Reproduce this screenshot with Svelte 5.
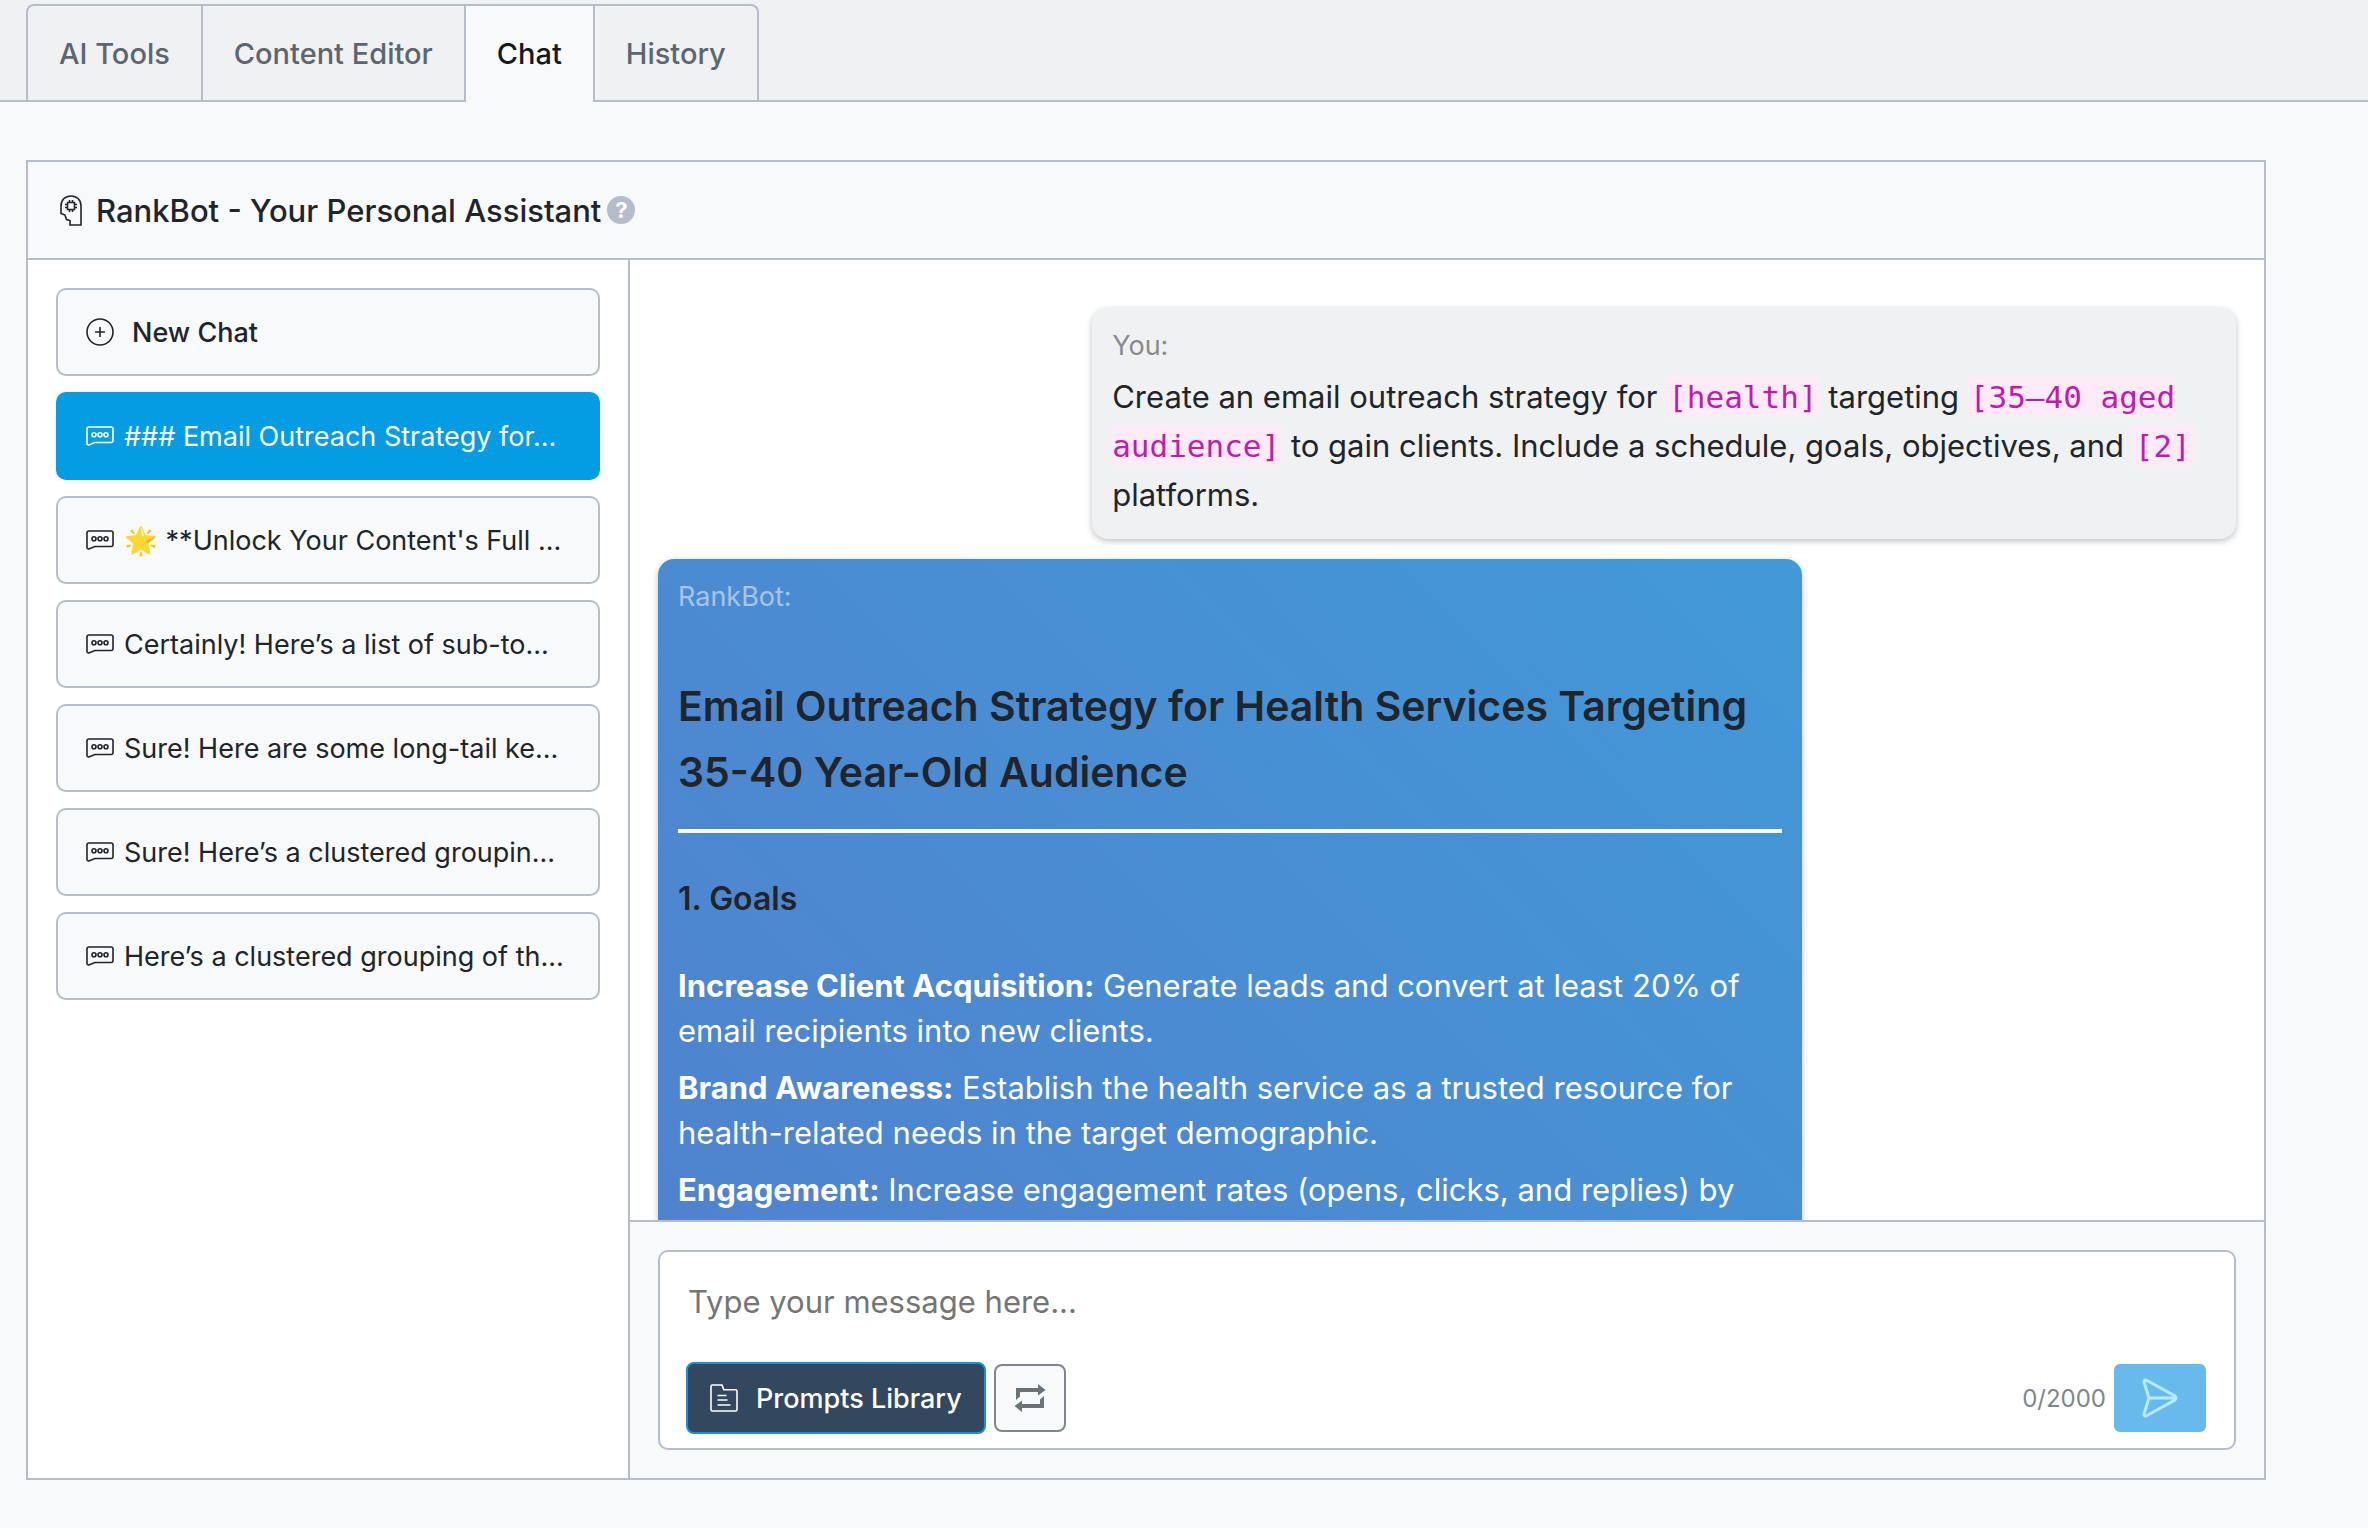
<script lang="ts">
	type Tab = { id: string; label: string };
	type Chat = { id: number; title: string };

	const MAX_LENGTH = 2000;

	const tabs: Tab[] = [
		{ id: 'tools', label: 'AI Tools' },
		{ id: 'editor', label: 'Content Editor' },
		{ id: 'chat', label: 'Chat' },
		{ id: 'history', label: 'History' }
	];

	const chats: Chat[] = [
		{ id: 1, title: '### Email Outreach Strategy for...' },
		{ id: 2, title: "🌟 **Unlock Your Content's Full ..." },
		{ id: 3, title: 'Certainly! Here’s a list of sub-to...' },
		{ id: 4, title: 'Sure! Here are some long-tail ke...' },
		{ id: 5, title: 'Sure! Here’s a clustered groupin...' },
		{ id: 6, title: 'Here’s a clustered grouping of th...' }
	];

	const goals = [
		{
			name: 'Increase Client Acquisition:',
			text: 'Generate leads and convert at least 20% of email recipients into new clients.'
		},
		{
			name: 'Brand Awareness:',
			text: 'Establish the health service as a trusted resource for health-related needs in the target demographic.'
		},
		{
			name: 'Engagement:',
			text: 'Increase engagement rates (opens, clicks, and replies) by'
		}
	];

	let activeTab = $state('chat');
	let activeChat = $state(1);
	let message = $state('');
</script>

<nav class="tab-bar">
	<div class="tabs" role="tablist">
		{#each tabs as tab (tab.id)}
			<button
				type="button"
				role="tab"
				class="tab"
				class:active={activeTab === tab.id}
				aria-selected={activeTab === tab.id}
				onclick={() => (activeTab = tab.id)}
			>
				{tab.label}
			</button>
		{/each}
	</div>
</nav>

<main class="page">
	<section class="panel">
		<header class="panel-header">
			<svg class="icon-head" viewBox="0 0 22 31" aria-hidden="true">
				<path d="M1 11C1 5 5 1 11 1s10 4 10 10v19H10v-4.500l-3.500-1L5 20l-4-1.500z" />
				<path d="M7.500 7.500h7v7h-7zM9.500 5v2.500M12.500 5v2.500M9.500 14.500V17M12.500 14.500V17M5 9.500h2.500M5 12.500h2.500M14.500 9.500H17M14.500 12.500H17" />
			</svg>
			<h1>RankBot - Your Personal Assistant</h1>
			<button type="button" class="help" aria-label="Help">?</button>
		</header>

		<div class="panel-body">
			<aside class="sidebar">
				<button type="button" class="chat-item new-chat">
					<svg class="icon-plus" viewBox="0 0 28 28" aria-hidden="true">
						<circle cx="14" cy="14" r="13" />
						<path d="M14 9v10M9 14h10" />
					</svg>
					New Chat
				</button>
				{#each chats as chat (chat.id)}
					<button
						type="button"
						class="chat-item"
						class:active={activeChat === chat.id}
						onclick={() => (activeChat = chat.id)}
					>
						<svg class="icon-chat" viewBox="0 0 28 20" aria-hidden="true">
							<path d="M3 1h22a2 2 0 0 1 2 2v11.500a2 2 0 0 1-2 2H9l-5.500 2.200Q1 19.500 1 17V3a2 2 0 0 1 2-2z" />
							<circle cx="8" cy="8.700" r="2" />
							<circle cx="14" cy="8.700" r="2" />
							<circle cx="20" cy="8.700" r="2" />
						</svg>
						<span>{chat.title}</span>
					</button>
				{/each}
			</aside>

			<div class="conversation">
				<div class="messages">
					<article class="message user">
						<p class="author">You:</p>
						<p class="prompt">
							Create an email outreach strategy for <code>[health]</code> targeting
							<code>[35–40 aged audience]</code> to gain clients. Include a schedule, goals,
							objectives, and <code>[2]</code> platforms.
						</p>
					</article>

					<article class="message bot">
						<p class="author">RankBot:</p>
						<h2>Email Outreach Strategy for Health Services Targeting 35-40 Year-Old Audience</h2>
						<hr />
						<h3>1. Goals</h3>
						<ul>
							{#each goals as goal (goal.name)}
								<li><strong>{goal.name}</strong> {goal.text}</li>
							{/each}
						</ul>
					</article>
				</div>

				<form class="composer" onsubmit={(event) => event.preventDefault()}>
					<div class="composer-box">
						<textarea
							rows="1"
							aria-label="Message"
							placeholder="Type your message here..."
							maxlength={MAX_LENGTH}
							bind:value={message}
						></textarea>
						<div class="actions">
							<button type="button" class="library">
								<svg class="icon-folder" viewBox="0 0 28 28" aria-hidden="true">
									<path d="M2.500 1H12l1.800 4.700H25.500A1.500 1.500 0 0 1 27 7.200v18.300a1.500 1.500 0 0 1-1.500 1.500h-23A1.500 1.500 0 0 1 1 25.500v-23A1.500 1.500 0 0 1 2.500 1z" />
									<path d="M7.500 11.500h9M7.500 16h10M7.500 21h13" />
								</svg>
								Prompts Library
							</button>
							<button type="button" class="repeat" aria-label="Regenerate">
								<svg class="icon-repeat" viewBox="0 0 32 28" aria-hidden="true">
									<path d="M2 16V4h22V0l7.500 6-7.500 5.500V8H6v4.500zM30 12v12H8v4L.5 22 8 16.500V20h18v-4.500z" />
								</svg>
							</button>
							<span class="counter">{message.length}/{MAX_LENGTH}</span>
							<button type="submit" class="send" aria-label="Send" disabled={!message}>
								<svg class="icon-send" viewBox="0 0 36 40" aria-hidden="true">
									<path d="M2 4q0-3 3-1.500L33 18q2 2 0 4L5 37.500Q2 39 2 36L7 20zM7 20h26" />
								</svg>
							</button>
						</div>
					</div>
				</form>
			</div>
		</div>
	</section>
</main>

<style>
	:global(body) {
		margin: 0;
		background: #f7f9fb;
		color: #212529;
		font-family: Inter, 'Noto Sans', sans-serif;
	}

	h1,
	h2,
	h3,
	p,
	ul {
		margin: 0;
	}

	button,
	textarea {
		box-sizing: border-box;
		font: inherit;
		color: inherit;
	}

	button {
		cursor: pointer;
	}

	svg {
		flex: none;
		fill: none;
		stroke: currentColor;
		stroke-width: 1.6;
	}

	.tab-bar {
		padding: 4px 26px 0;
		background: #f0f1f3;
		box-shadow: inset 0 -2px #b4bdc9;
	}

	.tabs {
		display: inline-flex;
		vertical-align: top;
		border: 2px solid #b4bdc9;
		border-bottom: 0;
		border-radius: 8px 8px 0 0;
	}

	.tab {
		height: 96px;
		padding: 0 31px 2px;
		border: 0;
		border-right: 2px solid #b4bdc9;
		background: none;
		color: #5c666f;
		font-size: 29px;
		font-weight: 500;
	}

	.tab:last-child {
		border-right: 0;
	}

	.tab.active {
		background: #f7f9fb;
		color: #16191c;
	}

	.page {
		padding: 58px 102px 48px 26px;
	}

	.panel {
		border: 2px solid #b4bdc9;
	}

	.panel-header {
		display: flex;
		align-items: center;
		height: 96px;
		padding: 0 32px;
		border-bottom: 2px solid #b4bdc9;
	}

	h1 {
		margin-left: 14px;
		font-size: 31px;
		font-weight: 500;
	}

	.help {
		width: 28px;
		height: 28px;
		margin-left: 6px;
		padding: 0;
		border: 0;
		border-radius: 50%;
		background: #b4bdc9;
		color: #fff;
		font-size: 22px;
		font-weight: 700;
		line-height: 28px;
	}

	.panel-body {
		display: grid;
		grid-template-columns: 600px minmax(0, 1fr);
		background: #fff;
	}

	.sidebar {
		display: flex;
		flex-direction: column;
		gap: 16px;
		padding: 28px;
	}

	.chat-item {
		display: flex;
		align-items: center;
		gap: 10px;
		height: 88px;
		padding: 0 28px;
		border: 2px solid #b4bdc9;
		border-radius: 10px;
		background: #f7f9fb;
		font-size: 27px;
		white-space: nowrap;
	}

	.chat-item.active {
		border-color: #049de4;
		background: #049de4;
		color: #fff;
	}

	.new-chat {
		gap: 18px;
		font-weight: 500;
	}

	.conversation {
		display: flex;
		flex-direction: column;
		border-left: 2px solid #b4bdc9;
	}

	.messages {
		display: flex;
		flex-direction: column;
		gap: 20px;
		box-sizing: border-box;
		height: 960px;
		padding-top: 48px;
		overflow: hidden;
	}

	.message {
		flex: none;
		box-sizing: border-box;
		width: 70%;
		margin: 0 28px;
		padding: 20px;
		border-radius: 16px;
		box-shadow: 0 2px 6px rgb(0 0 0 / 0.25);
	}

	.author {
		font-size: 27px;
		line-height: 36px;
		opacity: 0.5;
	}

	.user {
		align-self: flex-end;
		background: #f0f1f3;
	}

	.prompt {
		margin-top: 8px;
		font-size: 31px;
		line-height: 49px;
	}

	code {
		padding: 2px;
		background: #fdebf8;
		color: #c41aab;
		font-family: 'DejaVu Sans Mono', monospace;
		font-size: 31px;
		line-height: 1;
	}

	.bot {
		background: linear-gradient(45deg, #5082ce, #4299d8);
		color: #fff;
	}

	h2 {
		margin-top: 58px;
		color: #212529;
		font-size: 41px;
		font-weight: 600;
		line-height: 66px;
	}

	hr {
		height: 4px;
		margin: 24px 0 44px;
		border: 0;
		background: #fff;
	}

	h3 {
		color: #212529;
		font-size: 32px;
		font-weight: 600;
		line-height: 44px;
	}

	ul {
		padding: 0;
		margin-top: 42px;
		list-style: none;
	}

	li {
		margin-bottom: 12px;
		font-size: 31px;
		line-height: 45px;
	}

	.composer {
		padding: 28px;
		border-top: 2px solid #b4bdc9;
		background: #f7f9fb;
	}

	.composer-box {
		padding: 26px 28px 14px 26px;
		border: 2px solid #b4bdc9;
		border-radius: 10px;
		background: #fff;
	}

	textarea {
		display: block;
		width: 100%;
		height: 84px;
		padding: 2px;
		border: 0;
		outline: 0;
		background: none;
		font-size: 31px;
		line-height: 44px;
		resize: none;
	}

	textarea::placeholder {
		color: #757575;
	}

	.actions {
		display: flex;
		align-items: center;
		gap: 8px;
	}

	.library {
		display: flex;
		align-items: center;
		gap: 18px;
		height: 72px;
		padding: 0 22px;
		border: 2px solid #1591d6;
		border-radius: 8px;
		background: #33475e;
		color: #fff;
		font-size: 27px;
		font-weight: 500;
	}

	.repeat {
		display: grid;
		place-items: center;
		width: 72px;
		height: 68px;
		padding: 0;
		border: 2px solid #80868d;
		border-radius: 8px;
		background: #f7f9fb;
		color: #697378;
	}

	.counter {
		margin-left: auto;
		color: #80868d;
		font-size: 24px;
	}

	.send {
		display: grid;
		place-items: center;
		width: 92px;
		height: 68px;
		padding: 0;
		border: 0;
		border-radius: 6px;
		background: #69baec;
		color: #b4ebff;
	}

	.icon-head {
		width: 22px;
		height: 31px;
	}

	.icon-plus,
	.icon-folder {
		width: 28px;
		height: 28px;
	}

	.icon-chat {
		width: 28px;
		height: 20px;
	}

	.icon-repeat {
		width: 32px;
		height: 28px;
		fill: currentColor;
		stroke: none;
	}

	.icon-send {
		width: 36px;
		height: 40px;
		stroke-width: 3;
	}
</style>
